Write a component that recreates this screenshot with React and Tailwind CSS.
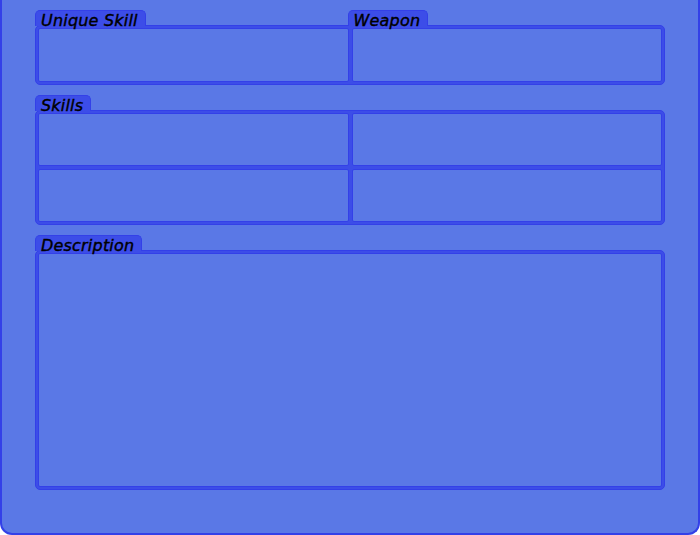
const font = { fontFamily: '"DejaVu Sans", Verdana, sans-serif' };

function Tab({ label }) {
  return (
    <div
      className="relative z-10 -mb-px h-[16px] self-start rounded-t-[5px] border border-b-0 border-[#3340e8] bg-[#3c4de8] pl-[5px] pr-[7px] text-[16px] leading-[19px] tracking-[0.2px] italic text-black [-webkit-text-stroke:0.4px_black]"
      style={font}
    >
      {label}
    </div>
  );
}

function Cell() {
  return <div className="rounded-[2px] border border-[#3340e8] bg-[#5a78e6]" />;
}

export default function App() {
  return (
    <div className="h-[535px] w-[700px] bg-white">
      <div className="flex h-[535px] flex-col gap-[10px] rounded-b-[12px] border-2 border-t-0 border-[#3340e8] bg-[#5a78e6] px-[33px] pt-[10px]">
        <div className="flex flex-col">
          <div className="grid grid-cols-2 gap-[3px] px-[3px]">
            <div className="-ml-[3px] flex">
              <Tab label="Unique Skill" />
            </div>
            <div className="-ml-[4px] flex">
              <Tab label="Weapon" />
            </div>
          </div>
          <div className="rounded-[5px] border border-[#3340e8] bg-[#3c4de8] p-[2px]">
            <div className="grid h-[54px] grid-cols-2 gap-[3px]">
              <Cell />
              <Cell />
            </div>
          </div>
        </div>

        <div className="flex flex-col">
          <Tab label="Skills" />
          <div className="rounded-[5px] border border-[#3340e8] bg-[#3c4de8] p-[2px]">
            <div className="grid h-[109px] grid-cols-2 grid-rows-2 gap-[3px]">
              <Cell />
              <Cell />
              <Cell />
              <Cell />
            </div>
          </div>
        </div>

        <div className="flex flex-col">
          <Tab label="Description" />
          <div className="rounded-[5px] border border-[#3340e8] bg-[#3c4de8] p-[2px]">
            <div className="grid h-[234px]">
              <Cell />
            </div>
          </div>
        </div>
      </div>
    </div>
  );
}
